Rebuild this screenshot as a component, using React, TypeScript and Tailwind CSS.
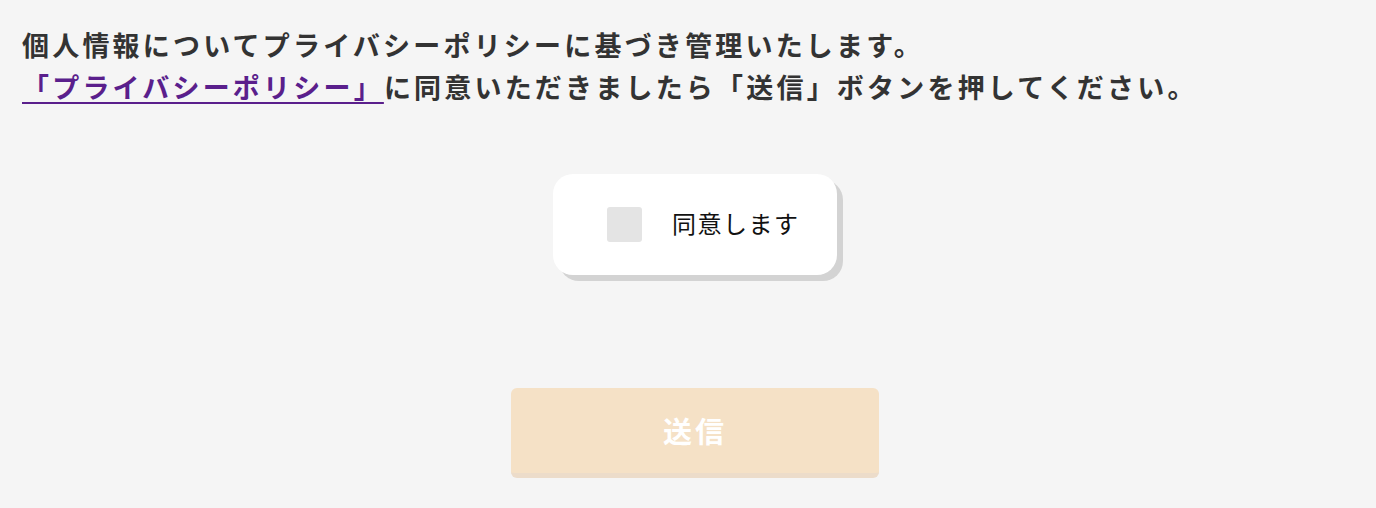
export default function App() {
  const jp = { fontFamily: '"Noto Sans CJK JP", "Noto Sans", sans-serif' };
  return (
    <div className="min-h-[508px] w-full bg-[#f5f5f5] text-[#333333]" style={jp}>
      <div className="px-[22px] pt-[24px]">
        <p className="text-[27px] font-bold leading-[42px] tracking-[3.2px]">
          個人情報についてプライバシーポリシーに基づき管理いたします。
          <br />
          <a href="#" className="text-[#5a1f8c] underline decoration-2 underline-offset-[4px]">
            「プライバシーポリシー」
          </a>
          に同意いただきましたら「送信」ボタンを押してください。
        </p>
      </div>
      <div className="flex flex-col items-center pl-[14px]">
        <label className="mt-[66px] flex h-[101px] w-[284px] items-center rounded-[20px] bg-white pl-[54px] shadow-[6px_6px_0_#d3d3d3]">
          <span className="h-[35px] w-[35px] rounded-[3px] bg-[#e4e4e4]" />
          <span className="ml-[30px] -translate-y-[2px] text-[24px] leading-none tracking-[1.5px] text-[#111111]">同意します</span>
        </label>
        <button className="mt-[113px] flex h-[90px] w-[368px] items-center justify-center rounded-[6px] border-b-[5px] border-[#ecdcca] bg-[#f5e1c6] text-[29px] font-bold tracking-[3px] text-white">
          送信
        </button>
      </div>
    </div>
  );
}
